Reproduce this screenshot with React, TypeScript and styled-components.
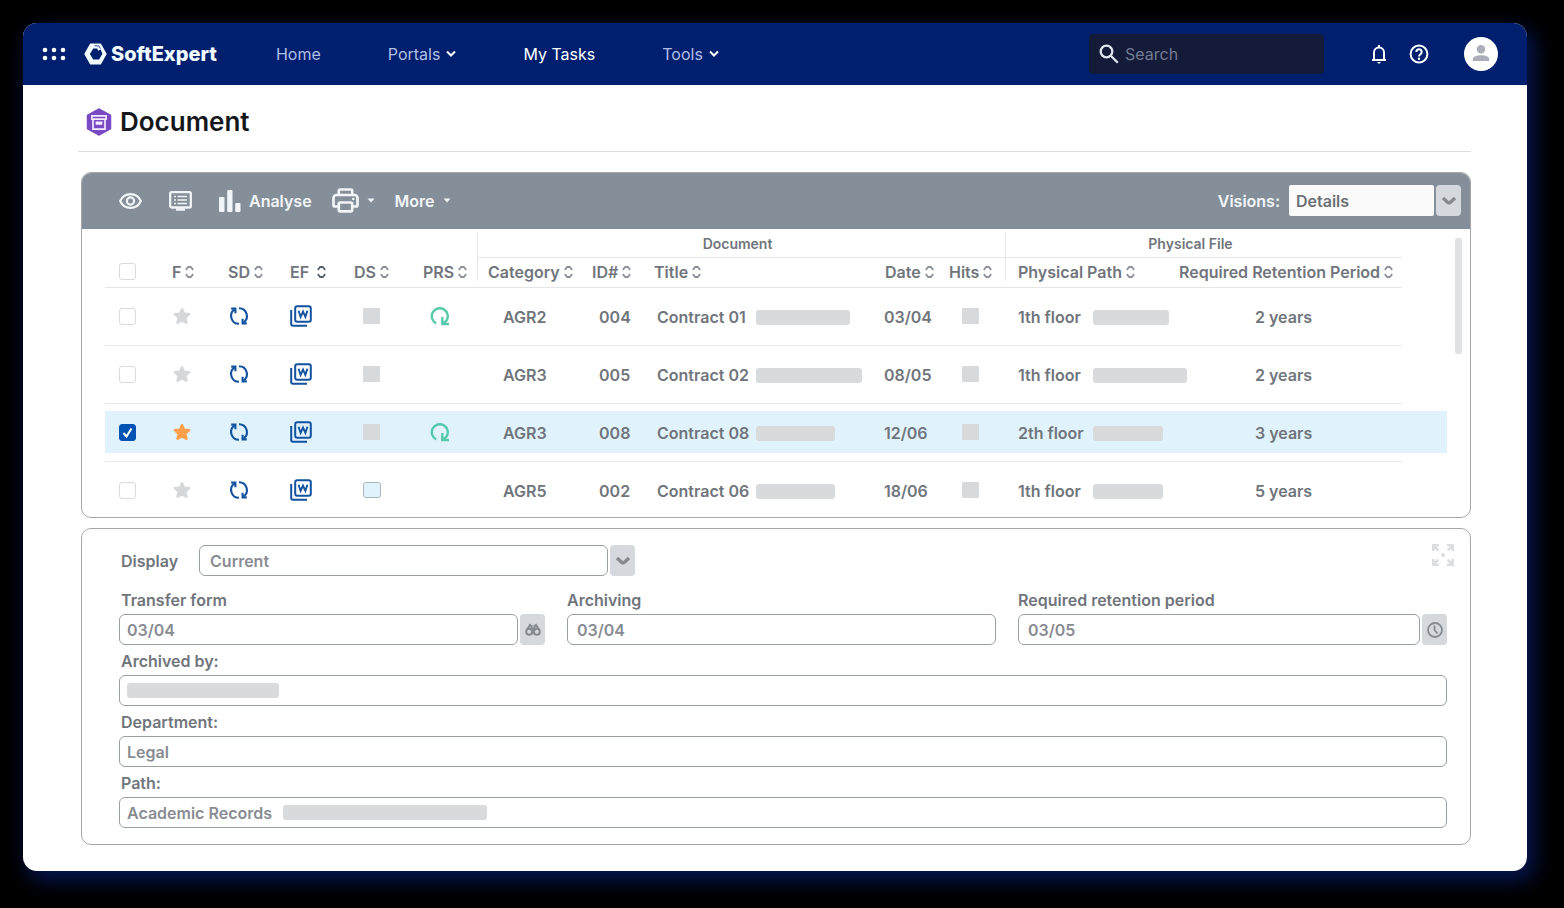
import React from "react";
import styled, { createGlobalStyle, css } from "styled-components";

const GlobalStyle = createGlobalStyle`
  * { box-sizing: border-box; }
  body {
    margin: 0;
    background: #000;
    color: #70757c;
    font: 600 16px/20px Inter, "Liberation Sans", sans-serif;
  }
  button, input, select { font: inherit; color: inherit; }
  svg { display: block; flex: none; }
`;

const Page = styled.div`
  padding: 23px 37px 37px 23px;
`;

const Window = styled.div`
  border-radius: 14px;
  overflow: hidden;
  background: #fff;
  box-shadow: 6px 8px 20px 2px #05154f;
`;

const TopBar = styled.header`
  display: flex;
  align-items: center;
  height: 62px;
  padding: 0 29px 0 19px;
  background: #00206f;
  color: #fff;
`;

const IconButton = styled.button`
  display: flex;
  align-items: center;
  gap: 8px;
  padding: 0;
  border: 0;
  background: none;
  cursor: pointer;
`;

const Brand = styled.a`
  display: flex;
  align-items: center;
  gap: 4px;
  margin-left: 18px;
  color: #f2fbff;
  font-size: 20px;
  font-weight: 800;
  text-decoration: none;
`;

const Nav = styled.nav`
  display: flex;
  gap: 67px;
  margin-left: 59px;
`;

const NavLink = styled.a<{ $active?: boolean }>`
  display: flex;
  align-items: center;
  gap: 6px;
  color: ${(p) => (p.$active ? "#fff" : "#b3bfe6")};
  font-weight: 400;
  text-decoration: none;
  white-space: nowrap;
  svg { color: #fff; }
`;

const SearchBox = styled.label`
  display: flex;
  align-items: center;
  gap: 6px;
  width: 235px;
  height: 40px;
  margin-left: auto;
  padding: 0 10px;
  border-radius: 4px;
  background: #131b38;
  color: #dfe3ee;
`;

const SearchInput = styled.input`
  flex: 1;
  min-width: 0;
  padding: 0;
  border: 0;
  outline: 0;
  background: none;
  font-weight: 400;
  &::placeholder { color: #727b96; opacity: 1; }
`;

const Actions = styled.div`
  display: flex;
  align-items: center;
  gap: 20px;
  margin: 0 35px 0 45px;
  color: #fff;
  button { color: #fff; }
`;

const Main = styled.main`
  padding: 0 56px 26px 58px;
`;

const TitleBar = styled.div`
  display: flex;
  align-items: center;
  gap: 8px;
  height: 67px;
  margin: 0 0 20px -3px;
  padding: 8px 0 0 8px;
  border-bottom: 1px solid #dcdcde;
`;

const Title = styled.h1`
  margin: 0;
  color: #15171a;
  font-size: 26px;
  line-height: 32px;
  font-weight: 600;
`;

const Panel = styled.section`
  border: 1px solid #a4a8ab;
  border-radius: 10px;
  overflow: hidden;
  & + & { margin-top: 10px; }
`;

const Toolbar = styled.div`
  display: flex;
  align-items: center;
  gap: 20px;
  height: 57px;
  margin: -1px -1px 0;
  padding: 0 10px 0 38px;
  background: #848f9a;
  color: #f2f5f8;
  button { color: inherit; }
`;

const ViewTools = styled.div`
  display: flex;
  align-items: center;
  gap: 27px;
`;

const Visions = styled.div`
  display: flex;
  align-items: center;
  gap: 9px;
  margin-left: auto;
`;

const SelectGroup = styled.span`
  display: flex;
  gap: 2px;
`;

const boxed = css`
  height: 31px;
  border: 1px solid #9a9fa3;
  border-radius: 6px;
  background: #fff;
  color: #888c92;
`;

const Select = styled.select<{ $plain?: boolean }>`
  ${boxed}
  appearance: none;
  width: ${(p) => (p.$plain ? 145 : 409)}px;
  padding: 0 10px;
  ${(p) => p.$plain && css`
    padding: 0 7px;
    border: 0;
    border-radius: 2px;
    background: #fafafa;
    color: #6c7075;
  `}
`;

const Addon = styled.span`
  display: flex;
  align-items: center;
  justify-content: center;
  width: 25px;
  height: 31px;
  padding: 0;
  border: 0;
  border-radius: 4px;
  background: #d5d8dc;
  color: #858a91;
`;

const TableArea = styled.div`
  display: flex;
  align-items: flex-start;
  gap: 8px;
  padding: 0 8px 1px 23px;
`;

const ScrollThumb = styled.div`
  width: 7px;
  height: 116px;
  margin-top: 9px;
  border-radius: 3px;
  background: #e1e2e3;
`;

const Table = styled.table`
  flex: 1;
  width: 100%;
  table-layout: fixed;
  border-collapse: separate;
  border-spacing: 0;
`;

const GroupHead = styled.th<{ $shift?: number }>`
  height: 29px;
  padding: 3px 0 0;
  font-size: 14px;
  font-weight: 600;
  div {
    height: 26px;
    padding: 2px ${(p) => p.$shift || 0}px 0 0;
    border-left: 1px solid #e4e6e8;
    border-bottom: 1px solid #e4e6e8;
  }
`;

const Head = styled.th<{ $pad: number; $rule?: boolean }>`
  height: 30px;
  padding: 0 0 6px;
  border-bottom: 1px solid #e4e6e8;
  font-weight: 600;
  > div {
    display: flex;
    align-items: center;
    height: 23px;
    padding: 4px 0 0 ${(p) => p.$pad}px;
    border-left: ${(p) => (p.$rule ? 1 : 0)}px solid #e4e6e8;
    white-space: nowrap;
  }
`;

const SortButton = styled(IconButton)<{ $loose?: boolean }>`
  gap: ${(p) => (p.$loose ? 8 : 4)}px;
`;

const Row = styled.tr<{ $selected?: boolean }>`
  td > div { background: ${(p) => (p.$selected ? "#e0f3fd" : "none")}; }
  td { border-bottom: 1px solid #e7e9ea; }
  td:last-child { border-color: transparent; }
  &:last-child td { padding-bottom: 5px; border-bottom: 0; }
`;

const Cell = styled.td<{ $pad?: number; $text?: boolean }>`
  padding: 7px 0 8px;
  > div {
    display: flex;
    align-items: center;
    gap: 8px;
    height: 42px;
    padding: ${(p) => (p.$text ? 2 : 0)}px 0 0 ${(p) => p.$pad || 0}px;
    white-space: nowrap;
  }
`;

const Checkbox = styled.input`
  appearance: none;
  width: 17px;
  height: 17px;
  margin: 0;
  border: 1px solid #d8dadd;
  border-radius: 3px;
  background: #fff center / 13px no-repeat;
  &:checked {
    border-color: #0053b3;
    background-color: #0053b3;
    background-image: url("data:image/svg+xml,%3Csvg xmlns='http://www.w3.org/2000/svg' viewBox='0 0 13 13'%3E%3Cpath d='M2.5 7l3 3.5 5-8' fill='none' stroke='white' stroke-width='2'/%3E%3C/svg%3E");
  }
`;

const Bar = styled.span<{ $w: number }>`
  flex: none;
  width: ${(p) => p.$w}px;
  height: 15px;
  border-radius: 3px;
  background: #d8dadc;
`;

const Square = styled.span<{ $open?: boolean }>`
  width: 17px;
  height: 16px;
  border-radius: 1px;
  background: #d8d9db;
  ${(p) => p.$open && css`
    width: 18px;
    border: 1px solid #a9b6bd;
    border-radius: 3px;
    background: #e0f3fd;
  `}
`;

const CellText = styled.span<{ $w: number }>`
  flex: none;
  width: ${(p) => p.$w}px;
`;

const Form = styled.form`
  padding: 16px 23px 16px 37px;
`;

const DisplayRow = styled.div`
  display: flex;
  align-items: center;
  gap: 21px;
  margin-bottom: 14px;
  padding-left: 2px;
  > button {
    align-self: flex-start;
    margin: -1px -7px 0 auto;
    color: #dcdddf;
  }
`;

const Fields = styled.div`
  display: grid;
  grid-template-columns: 426fr 429fr 429fr;
  gap: 6px 22px;
`;

const Field = styled.div<{ $wide?: boolean }>`
  display: flex;
  flex-direction: column;
  gap: 4px;
  ${(p) => p.$wide && "grid-column: 1 / -1;"}
`;

const Label = styled.label<{ $flush?: boolean }>`
  padding-left: ${(p) => (p.$flush ? 0 : 2)}px;
`;

const Control = styled.div`
  display: flex;
  gap: 2px;
`;

const Box = styled.div<{ $pad?: number }>`
  ${boxed}
  flex: 1;
  display: flex;
  align-items: center;
  gap: 8px;
  min-width: 0;
  padding: 0 ${(p) => p.$pad || 7}px;
`;

const TextInput = styled.input<{ $w?: number }>`
  flex: ${(p) => (p.$w ? "none" : "1")};
  width: ${(p) => (p.$w ? `${p.$w}px` : "100%")};
  min-width: 0;
  padding: 0;
  border: 0;
  outline: 0;
  background: none;
`;

const Chevron = () => (
  <svg width="10" height="10" viewBox="0 0 10 10" fill="none" stroke="currentColor" strokeWidth="2">
    <path d="M1 2.500l4 4 4-4" />
  </svg>
);

const SelectArrow = () => (
  <svg width="16" height="10" viewBox="0 0 16 10" fill="none" stroke="currentColor" strokeWidth="3.4">
    <path d="M2 2 6.600 6.300q1.400 1.200 2.800 0L14 2" />
  </svg>
);

const Sort = ({ dark }: { dark?: boolean }) => (
  <svg width="9" height="14" viewBox="0 0 9 14" fill="none" stroke={dark ? "#56616d" : "#8c9299"} strokeWidth="1.800">
    <path d="M.8 4.800 3.200 2h2.600l2.400 2.800M.8 9.200 3.200 12h2.600l2.400-2.800" />
  </svg>
);

const Caret = () => (
  <svg width="8" height="5" viewBox="0 0 8 5" fill="currentColor"><path d="M.5.5h7L4 4.500z" /></svg>
);

const AppsIcon = () => (
  <svg width="24" height="16" viewBox="0 0 24 16" fill="#fff">
    {[3, 12, 21].map((x) => [4, 12].map((y) => <circle key={`${x}-${y}`} cx={x} cy={y} r="2.300" />))}
  </svg>
);

const LogoMark = () => (
  <svg width="23" height="22" viewBox="0 0 23 22">
    <path fill="#f2fbff" stroke="#f2fbff" strokeWidth="1.400" strokeLinejoin="round" d="M6.600 1.200h9.800L22 11l-5.600 9.800H6.600L1 11z" />
    <path fill="#00206f" d="M9.300 5.600h3.900l1 2.200 2.500-1.400 1.700 4.400-3.300 5.600H9.200L5.900 11z" />
    <path d="m10.600 2.800 4.300.2 1.500 2.600" fill="none" stroke="#00206f" strokeWidth=".8" />
  </svg>
);

const SearchIcon = () => (
  <svg width="20" height="20" viewBox="0 0 20 20" fill="none" stroke="currentColor" strokeWidth="2.300">
    <circle cx="7.500" cy="7.500" r="5.800" /><path d="m11.800 11.800 7 7" />
  </svg>
);

const BellIcon = () => (
  <svg width="20" height="20" viewBox="0 0 20 20" fill="none" stroke="currentColor" strokeWidth="2">
    <path d="M3 16h14M5 16V8.500a5 5 0 0 1 10 0V16M10 3.500V1" /><path d="M8 18h4l-2 2z" fill="currentColor" stroke="none" />
  </svg>
);

const HelpIcon = () => (
  <svg width="20" height="20" viewBox="0 0 20 20" fill="none" stroke="currentColor" strokeWidth="2">
    <circle cx="10" cy="10" r="8.400" /><path d="M7.300 8a2.700 2.700 0 1 1 4.300 2.100c-1 .8-1.600 1.200-1.600 2.400" /><circle cx="10" cy="14.700" r="1.200" fill="currentColor" stroke="none" />
  </svg>
);

const Avatar = () => (
  <svg width="34" height="34" viewBox="0 0 34 34">
    <circle cx="17" cy="17" r="17" fill="#fff" /><circle cx="17" cy="12.200" r="4.200" fill="#abaeb8" /><path d="M8.800 24v-2c0-5 16.400-5 16.400 0v2z" fill="#abaeb8" />
  </svg>
);

const DocumentIcon = () => (
  <svg width="26" height="28" viewBox="0 0 26 28" fill="none" stroke="#f5eaff" strokeWidth="1.700">
    <path d="M13 1.500 24 7.700v12.600L13 26.500 2 20.300V7.700z" fill="#7a49c4" stroke="#7a49c4" strokeWidth="2.500" strokeLinejoin="round" />
    <path d="M5.900 7.800h14.200v3.400H5.900zM7 11.200h12v10H7zM10.500 14.300h5v1.600h-5z" />
  </svg>
);

const EyeIcon = () => (
  <svg width="23" height="18" viewBox="0 0 23 18" fill="none" stroke="currentColor" strokeWidth="2.200">
    <path d="M1.200 9C5.200-.2 17.800-.2 21.800 9c-4 9.200-16.600 9.200-20.600 0z" /><circle cx="11.500" cy="9" r="3.600" />
  </svg>
);

const ScreenIcon = () => (
  <svg width="23" height="20" viewBox="0 0 23 20" fill="none" stroke="currentColor" strokeWidth="2.300">
    <rect x="1.200" y="1.200" width="20.600" height="15.300" rx="1.500" /><path d="M8.500 5.500h9.500M8.500 9h9.500M8.500 12.500h9.500M5 5.500h2M5 9h2M5 12.500h2" strokeWidth="1.600" /><path d="M7 18.500h9" />
  </svg>
);

const ChartIcon = () => (
  <svg width="22" height="22" viewBox="0 0 22 22" fill="currentColor">
    <rect y="7" width="5.500" height="15" rx="1" /><rect x="8.200" width="5.300" height="22" rx="1" /><rect x="16.200" y="13" width="5.300" height="9" rx="1" />
  </svg>
);

const PrintIcon = () => (
  <svg width="27" height="25" viewBox="0 0 27 25" fill="none" stroke="currentColor" strokeWidth="2.700" strokeLinejoin="round">
    <path d="M6.800 7V3q0-1.500 1.500-1.500h10.400q1.500 0 1.500 1.500v4M6.500 18.500h-3.500q-1.500 0-1.500-1.500V10a3 3 0 0 1 3-3h18a3 3 0 0 1 3 3v7q0 1.500-1.500 1.500h-3.500" /><rect x="6.800" y="14.500" width="13.400" height="8.800" rx="1.500" /><circle cx="21.300" cy="11" r="1.300" fill="currentColor" stroke="none" />
  </svg>
);

const StarIcon = ({ on }: { on?: boolean }) => {
  const tone = on ? "#ff9f4a" : "#d5d7d9";
  return (
    <svg width="18" height="18" viewBox="0 0 18 18" fill={tone} stroke={tone} strokeWidth="2.400" strokeLinejoin="round">
      <path d="m9 2.200 1.900 4.400 5.300.5-3.900 3.500 1.200 5.200L9 13.500l-4.500 2.300 1.200-5.200-3.900-3.500 5.300-.5z" />
    </svg>
  );
};

const SyncIcon = () => (
  <svg width="20" height="20" viewBox="0 0 20 20" fill="none" stroke="#12529f" strokeWidth="2.100">
    <path d="M10 2.200A7.800 7.800 0 0 1 14.200 16.600M10 17.800A7.800 7.800 0 0 1 5.800 3.400" />
    <path d="M2.200 2.600h4.200v4.600M17.800 17.400h-4.200v-4.600" />
  </svg>
);

const WordIcon = () => (
  <svg width="22" height="22" viewBox="0 0 22 22" fill="none" stroke="#12529f" strokeWidth="2">
    <rect x="5.200" y="1.200" width="15.600" height="15.600" rx="2" /><path d="M1.200 5v14q0 1.800 1.800 1.800h14" /><path d="m8.600 5.800 2 6 2.400-5.300 2.400 5.300 2-6" strokeWidth="1.900" />
  </svg>
);

const RedoIcon = () => (
  <svg width="20" height="20" viewBox="0 0 20 20" fill="none" stroke="#57c9ad" strokeWidth="2.400">
    <path d="M6.200 17.400A8 8 0 1 1 16.500 14.600L13 17.400" /><path d="M12.300 11v7h6.700" />
  </svg>
);

const BinocularsIcon = () => (
  <svg width="16" height="14" viewBox="0 0 16 14" fill="none" stroke="currentColor" strokeWidth="2">
    <circle cx="4.200" cy="8.800" r="3" /><circle cx="11.800" cy="8.800" r="3" /><path d="M2.200 6.500 5 2l1.600 1v5M13.800 6.500 11 2 9.400 3v5M7 6h2" />
  </svg>
);

const ClockIcon = () => (
  <svg width="16" height="16" viewBox="0 0 16 16" fill="none" stroke="currentColor" strokeWidth="1.800">
    <circle cx="8" cy="8" r="7" /><path d="M7.500 3.500V8l3 3.500" />
  </svg>
);

const ExpandIcon = () => (
  <svg width="22" height="22" viewBox="0 0 22 22" fill="none" stroke="currentColor" strokeWidth="2.600">
    <path d="M1.300 7V1.300H7M1.300 1.300l5 5M15 1.300h5.700V7M20.700 1.300l-5 5M1.300 15v5.700H7M1.300 20.700l5-5M20.700 15v5.700H15M20.700 20.700l-5-5" /><circle cx="11" cy="11" r="2" fill="currentColor" stroke="none" />
  </svg>
);

const columns = [
  { label: "F", width: 60, pad: 12 },
  { label: "SD", width: 60, pad: 8 },
  { label: "EF", width: 60, pad: 10, dark: true },
  { label: "DS", width: 70, pad: 14 },
  { label: "PRS", width: 67, pad: 13 },
  { label: "Category", width: 103, pad: 10, rule: true },
  { label: "ID#", width: 65, pad: 12 },
  { label: "Title", pad: 9 },
  { label: "Date", width: 65, pad: 10 },
  { label: "Hits", width: 65, pad: 9 },
  { label: "Physical Path", width: 165, pad: 12, rule: true },
  { label: "Required Retention Period", width: 232, pad: 9 },
];

const rows = [
  { cat: "AGR2", id: "004", title: "Contract 01", bar: 94, date: "03/04", floor: "1th floor", floorBar: 76, years: "2 years", redo: true },
  { cat: "AGR3", id: "005", title: "Contract 02", bar: 106, date: "08/05", floor: "1th floor", floorBar: 94, years: "2 years" },
  { cat: "AGR3", id: "008", title: "Contract 08", bar: 79, date: "12/06", floor: "2th floor", floorBar: 70, years: "3 years", redo: true, selected: true },
  { cat: "AGR5", id: "002", title: "Contract 06", bar: 79, date: "18/06", floor: "1th floor", floorBar: 70, years: "5 years", open: true },
];

export default function App() {
  return (
    <Page>
      <GlobalStyle />
      <Window>
        <TopBar>
          <IconButton aria-label="Applications"><AppsIcon /></IconButton>
          <Brand href="#"><LogoMark />SoftExpert</Brand>
          <Nav>
            <NavLink href="#">Home</NavLink>
            <NavLink href="#">Portals<Chevron /></NavLink>
            <NavLink href="#" $active>My Tasks</NavLink>
            <NavLink href="#">Tools <Chevron /></NavLink>
          </Nav>
          <SearchBox>
            <SearchIcon />
            <SearchInput type="search" placeholder="Search" aria-label="Search" />
          </SearchBox>
          <Actions>
            <IconButton aria-label="Notifications"><BellIcon /></IconButton>
            <IconButton aria-label="Help"><HelpIcon /></IconButton>
          </Actions>
          <IconButton aria-label="Account"><Avatar /></IconButton>
        </TopBar>
        <Main>
          <TitleBar><DocumentIcon /><Title>Document</Title></TitleBar>
          <Panel>
            <Toolbar>
              <ViewTools>
                <IconButton aria-label="View"><EyeIcon /></IconButton>
                <IconButton aria-label="Details"><ScreenIcon /></IconButton>
                <IconButton><ChartIcon />Analyse</IconButton>
              </ViewTools>
              <IconButton aria-label="Print"><PrintIcon /><Caret /></IconButton>
              <IconButton>More <Caret /></IconButton>
              <Visions>
                <label htmlFor="visions">Visions:</label>
                <SelectGroup>
                  <Select id="visions" $plain><option>Details</option></Select>
                  <Addon aria-hidden="true"><SelectArrow /></Addon>
                </SelectGroup>
              </Visions>
            </Toolbar>
            <TableArea>
              <Table>
                <colgroup>
                  <col width={55} />
                  {columns.map((c) => <col key={c.label} width={c.width} />)}
                  <col width={45} />
                </colgroup>
                <thead>
                  <tr>
                    <td colSpan={6} />
                    <GroupHead colSpan={5} $shift={8}><div>Document</div></GroupHead>
                    <GroupHead colSpan={2} $shift={27}><div>Physical File</div></GroupHead>
                    <td />
                  </tr>
                  <tr>
                    <Head $pad={14}><div><Checkbox type="checkbox" aria-label="Select all" /></div></Head>
                    {columns.map((c) => (
                      <Head key={c.label} $pad={c.pad} $rule={c.rule}>
                        <div><SortButton $loose={c.dark}>{c.label}<Sort dark={c.dark} /></SortButton></div>
                      </Head>
                    ))}
                    <td />
                  </tr>
                </thead>
                <tbody>
                  {rows.map((r) => (
                    <Row key={r.id} $selected={r.selected}>
                      <Cell $pad={14}><div><Checkbox type="checkbox" defaultChecked={r.selected} aria-label={`Select ${r.title}`} /></div></Cell>
                      <Cell $pad={13}><div><StarIcon on={r.selected} /></div></Cell>
                      <Cell $pad={9}><div><SyncIcon /></div></Cell>
                      <Cell $pad={10}><div><WordIcon /></div></Cell>
                      <Cell $pad={23}><div><Square $open={r.open} /></div></Cell>
                      <Cell $pad={20}><div>{r.redo && <RedoIcon />}</div></Cell>
                      <Cell $pad={26} $text><div>{r.cat}</div></Cell>
                      <Cell $pad={19} $text><div>{r.id}</div></Cell>
                      <Cell $pad={12} $text><div><CellText $w={91}>{r.title}</CellText><Bar $w={r.bar} /></div></Cell>
                      <Cell $pad={9} $text><div>{r.date}</div></Cell>
                      <Cell $pad={22}><div><Square /></div></Cell>
                      <Cell $pad={13} $text><div><CellText $w={67}>{r.floor}</CellText><Bar $w={r.floorBar} /></div></Cell>
                      <Cell $pad={85} $text><div>{r.years}</div></Cell>
                      <Cell><div /></Cell>
                    </Row>
                  ))}
                </tbody>
              </Table>
              <ScrollThumb />
            </TableArea>
          </Panel>
          <Panel>
            <Form>
              <DisplayRow>
                <Label htmlFor="display" $flush>Display</Label>
                <SelectGroup>
                  <Select id="display"><option>Current</option></Select>
                  <Addon aria-hidden="true"><SelectArrow /></Addon>
                </SelectGroup>
                <IconButton type="button" aria-label="Expand"><ExpandIcon /></IconButton>
              </DisplayRow>
              <Fields>
                <Field>
                  <Label htmlFor="transfer">Transfer form</Label>
                  <Control>
                    <Box><TextInput id="transfer" defaultValue="03/04" /></Box>
                    <Addon as="button" type="button" aria-label="Find"><BinocularsIcon /></Addon>
                  </Control>
                </Field>
                <Field>
                  <Label htmlFor="archiving" $flush>Archiving</Label>
                  <Control><Box $pad={9}><TextInput id="archiving" defaultValue="03/04" /></Box></Control>
                </Field>
                <Field>
                  <Label htmlFor="retention" $flush>Required retention period</Label>
                  <Control>
                    <Box $pad={9}><TextInput id="retention" defaultValue="03/05" /></Box>
                    <Addon as="button" type="button" aria-label="Pick time"><ClockIcon /></Addon>
                  </Control>
                </Field>
                <Field $wide>
                  <Label htmlFor="archived-by">Archived by:</Label>
                  <Control><Box><Bar $w={152} /><TextInput id="archived-by" /></Box></Control>
                </Field>
                <Field $wide>
                  <Label htmlFor="department">Department:</Label>
                  <Control><Box><TextInput id="department" defaultValue="Legal" /></Box></Control>
                </Field>
                <Field $wide>
                  <Label htmlFor="path">Path:</Label>
                  <Control><Box><TextInput id="path" $w={148} defaultValue="Academic Records" /><Bar $w={204} /></Box></Control>
                </Field>
              </Fields>
            </Form>
          </Panel>
        </Main>
      </Window>
    </Page>
  );
}
